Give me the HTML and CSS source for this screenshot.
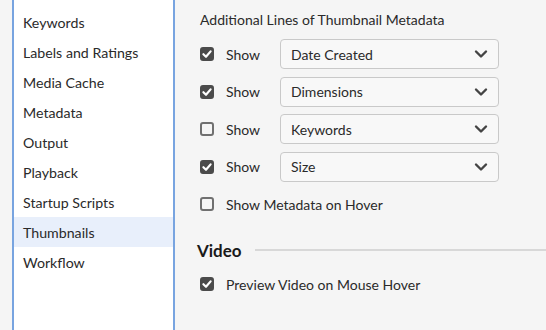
FILE: index.html
```html
<!DOCTYPE html>
<html>
<head>
<meta charset="utf-8">
<link rel="stylesheet" href="styles.css">
</head>
<body>
<div class="app">
  <nav class="sidebar">
    <div class="item">Keywords</div>
    <div class="item">Labels and Ratings</div>
    <div class="item">Media Cache</div>
    <div class="item">Metadata</div>
    <div class="item">Output</div>
    <div class="item">Playback</div>
    <div class="item">Startup Scripts</div>
    <div class="item selected">Thumbnails</div>
    <div class="item">Workflow</div>
  </nav>
  <main class="content">
    <div class="label">Additional Lines of Thumbnail Metadata</div>
    <div class="row">
      <span class="cb checked"><svg viewBox="0 0 14 14"><path d="M3.4 7.2 L6 9.8 L10.6 4.4" /></svg></span>
      <span class="show">Show</span>
      <div class="select"><span>Date Created</span><svg class="chev" viewBox="0 0 14 10"><path d="M2 2.5 L7 7.5 L12 2.5"/></svg></div>
    </div>
    <div class="row">
      <span class="cb checked"><svg viewBox="0 0 14 14"><path d="M3.4 7.2 L6 9.8 L10.6 4.4" /></svg></span>
      <span class="show">Show</span>
      <div class="select"><span>Dimensions</span><svg class="chev" viewBox="0 0 14 10"><path d="M2 2.5 L7 7.5 L12 2.5"/></svg></div>
    </div>
    <div class="row">
      <span class="cb"></span>
      <span class="show">Show</span>
      <div class="select"><span>Keywords</span><svg class="chev" viewBox="0 0 14 10"><path d="M2 2.5 L7 7.5 L12 2.5"/></svg></div>
    </div>
    <div class="row">
      <span class="cb checked"><svg viewBox="0 0 14 14"><path d="M3.4 7.2 L6 9.8 L10.6 4.4" /></svg></span>
      <span class="show">Show</span>
      <div class="select"><span>Size</span><svg class="chev" viewBox="0 0 14 10"><path d="M2 2.5 L7 7.5 L12 2.5"/></svg></div>
    </div>
    <div class="row single">
      <span class="cb"></span>
      <span class="text">Show Metadata on Hover</span>
    </div>
    <div class="section">
      <h2>Video</h2>
      <div class="rule"></div>
    </div>
    <div class="row single">
      <span class="cb checked"><svg viewBox="0 0 14 14"><path d="M3.4 7.2 L6 9.8 L10.6 4.4" /></svg></span>
      <span class="text">Preview Video on Mouse Hover</span>
    </div>
  </main>
</div>
</body>
</html>
```
FILE: styles.css
```css
* { box-sizing: border-box; }
html, body {
  margin: 0;
  padding: 0;
  background: #f5f5f5;
  font-family: "Lato", "Open Sans", sans-serif;
  color: #2a2a2a;
}
.app {
  display: flex;
  height: 330px;
  overflow: hidden;
}
.sidebar {
  margin-left: 12px;
  width: 163px;
  flex: none;
  background: #ffffff;
  border-left: 2px solid #78a4e0;
  border-right: 2px solid #78a4e0;
  padding-top: 7px;
}
.item {
  height: 30px;
  line-height: 30px;
  padding-top: 1px;
  padding-left: 9px;
  font-size: 14.2px;
  color: #2a2a2a;
}
.item.selected {
  background: #e8effb;
}
.content {
  flex: 1;
  padding-left: 25px;
  padding-top: 10px;
}
.label {
  font-size: 14px;
  height: 20px;
  line-height: 20px;
  margin-bottom: 9px;
}
.row {
  display: flex;
  align-items: center;
  height: 30px;
  margin-bottom: 7.5px;
}
.cb {
  width: 14px;
  height: 14px;
  border: 2px solid #707070;
  border-radius: 3px;
  display: flex;
  align-items: center;
  justify-content: center;
  flex: none;
}
.cb.checked {
  background: #4b4b4b;
  border-color: #4b4b4b;
}
.cb svg {
  width: 14px;
  height: 14px;
  flex: none;
}
.cb svg path {
  fill: none;
  stroke: #ffffff;
  stroke-width: 2.2;
  stroke-linecap: round;
  stroke-linejoin: round;
}
.show {
  margin-left: 12px;
  width: 54px;
  font-size: 14px;
}
.text {
  margin-left: 12px;
  font-size: 14px;
}
.select {
  width: 219px;
  height: 30px;
  border: 1px solid #c9c9c9;
  border-radius: 4px;
  background: #f8f8f8;
  display: flex;
  align-items: center;
  justify-content: space-between;
  padding-left: 10px;
  padding-right: 10px;
  font-size: 14px;
}
.chev {
  width: 14px;
  height: 10px;
}
.chev path {
  fill: none;
  stroke: #444444;
  stroke-width: 2.4;
  stroke-linecap: round;
  stroke-linejoin: round;
}
.section {
  display: flex;
  align-items: center;
  margin-top: 16px;
  margin-bottom: 4px;
  height: 30px;
}
.section h2 {
  margin: 0 0 0 -3px;
  font-size: 17px;
  font-weight: 700;
  color: #1a1a1a;
}
.rule {
  flex: 1;
  height: 2px;
  background: #d8d8d8;
  margin-left: 13px;
}
```
